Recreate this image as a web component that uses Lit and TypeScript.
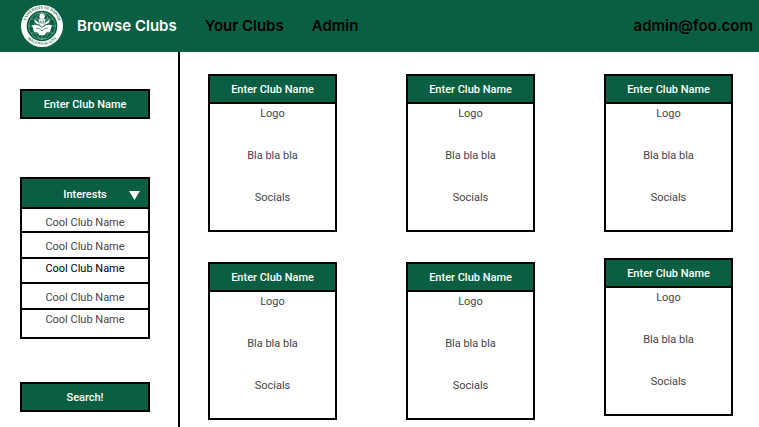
import { LitElement, html, css, svg } from "lit";
import { customElement, property, state } from "lit/decorators.js";
import { classMap } from "lit/directives/class-map.js";

@customElement("club-crest")
class ClubCrest extends LitElement {
  static styles = css`
    :host { display: block; width: 44px; height: 44px; }
    svg { display: block; width: 100%; height: 100%; overflow: visible; }
    text { font: 700 11px "Liberation Serif", serif; fill: #0a5f42; }
  `;
  render() {
    return html`
      <svg viewBox="0 0 132 132" role="img" aria-label="University crest">
        <defs>
          <path id="top" d="M21 92 A52 52 0 1 1 111 92" />
          <path id="bottom" d="M10 82 A59 59 0 0 0 122 82" />
        </defs>
        <circle cx="66" cy="66" r="63" fill="#fff" />
        <circle cx="66" cy="66" r="46" fill="#0a5f42" />
        <g fill="none" stroke="#a9cbbd" stroke-width="1.5">
          <circle cx="66" cy="66" r="40" />
          <ellipse cx="66" cy="66" rx="22" ry="40" />
          <path d="M26 66H106M32 45H100M32 87H100M66 26V106" />
        </g>
        <g fill="#fff">
          <path d="M36 64 Q52 58 66 72 Q80 58 96 64 L90 84 Q78 80 74 94 H58 Q54 80 42 84Z" />
          <path d="M42 48 Q54 50 59 62 Q47 62 42 48ZM90 48 Q78 50 73 62 Q85 62 90 48Z" />
          <path d="M59 62 L55 46 H77 L73 62 L66 69Z" />
          <path d="M60 44 Q54 34 66 26 Q64 32 71 29 Q78 36 71 44Z" />
        </g>
        <path d="M48 72 Q60 72 66 81 Q72 72 84 72M61 50V58M66 50V60M71 50V58" fill="none" stroke="#0a5f42" stroke-width="2" />
        ${svg`
          <text text-anchor="middle"><textPath href="#top" startOffset="50%">UNIVERSITY OF HAWAII</textPath></text>
          <text text-anchor="middle"><textPath href="#bottom" startOffset="50%">MA LUNA AE O NA</textPath></text>
        `}
      </svg>
    `;
  }
}

@customElement("club-card")
class ClubCard extends LitElement {
  @property() name = "";
  @property({ attribute: false }) rows: string[] = [];
  static styles = css`
    :host { display: block; color: #444; text-align: center; line-height: 16px; }
    .name {
      margin: 0; padding: 6px 0 4px; border: 2px solid #000; border-bottom: 0;
      background: #0a5f42; color: #fff; font-size: inherit; font-weight: 500;
    }
    .body {
      display: flex; flex-direction: column; gap: 26px;
      padding: 2px 0 24px; border: 2px solid #000; background: #fff;
    }
    .row { margin: 0; }
  `;
  render() {
    return html`
      <article>
        <h2 class="name">${this.name}</h2>
        <div class="body">${this.rows.map((r) => html`<p class="row">${r}</p>`)}</div>
      </article>
    `;
  }
}

@customElement("app-root")
class AppRoot extends LitElement {
  @state() private open = true;
  @state() private selected = 2;

  private interests = [
    { label: "Cool Club Name", fit: "low" },
    { label: "Cool Club Name", fit: "middle" },
    { label: "Cool Club Name", fit: "high" },
    { label: "Cool Club Name", fit: "middle" },
    { label: "Cool Club Name", fit: "last" },
  ];
  private rows = ["Logo", "Bla bla bla", "Socials"];
  private columns = [
    { tight: false, clubs: ["Enter Club Name", "Enter Club Name"] },
    { tight: false, clubs: ["Enter Club Name", "Enter Club Name"] },
    { tight: true, clubs: ["Enter Club Name", "Enter Club Name"] },
  ];

  static styles = css`
    :host {
      display: flex; flex-direction: column; min-height: 100vh;
      background: #fff; color: #000;
      font: 400 11px/16px Roboto, sans-serif;
    }
    * { box-sizing: border-box; }
    .bar {
      display: flex; align-items: center; height: 52px;
      padding: 0 6px 0 20px; background: #0a5f42;
      font: 600 15px/20px Inter, sans-serif;
    }
    .nav { display: flex; flex: 1; gap: 28px; margin-left: 13px; }
    a { color: #000; text-decoration: none; }
    .current { color: #fff; }
    .page { display: flex; flex: 1; }
    .side {
      display: flex; flex-direction: column; flex: none; width: 180px;
      padding: 37px 28px 15px 20px; border-right: 2px solid #000;
    }
    .control {
      display: block; width: 100%; height: 30px; margin: 0; padding: 1px 0 0;
      border: 2px solid #000; border-radius: 0; background: #0a5f42;
      color: #fff; font: inherit; font-weight: 500; text-align: center;
    }
    .control::placeholder { color: #fff; opacity: 1; }
    .picker { margin: 58px 0 43px; }
    .toggle {
      display: grid; grid-template-columns: 1fr auto 1fr; align-items: center;
      padding: 4px 8px 0; border-bottom: 0;
    }
    .label { grid-column: 2; }
    .arrow { justify-self: end; width: 11px; height: 9px; }
    .list { margin: 0; padding: 0; list-style: none; border-bottom: 2px solid #000; }
    .option {
      display: block; width: 100%; margin: 0; border: 2px solid #000; border-bottom: 0;
      background: #fff; color: #444; font: inherit; text-align: center;
    }
    .low { padding: 6px 0 0; }
    .middle { padding: 6px 0 2px; }
    .high { padding: 2px 0 5px; }
    .last { padding: 2px 0 9px; }
    .selected { color: #000; }
    .clubs {
      display: grid; flex: 1; grid-template-columns: repeat(3, 1fr);
      gap: 69px; padding: 22px 26px 7px 28px;
    }
    .column { display: flex; flex-direction: column; gap: 30px; }
    .tight { gap: 26px; }
  `;

  render() {
    return html`
      <header class="bar">
        <club-crest></club-crest>
        <nav class="nav">
          <a class="current" href="#browse" aria-current="page">Browse Clubs</a>
          <a href="#yours">Your Clubs</a>
          <a href="#admin">Admin</a>
        </nav>
        <a href="#account">admin@foo.com</a>
      </header>
      <div class="page">
        <aside class="side">
          <input class="control" type="text" aria-label="Club name" placeholder="Enter Club Name" />
          <div class="picker">
            <button class="control toggle" aria-expanded=${this.open} @click=${() => (this.open = !this.open)}>
              <span class="label">Interests</span>
              <svg class="arrow" viewBox="0 0 12 10" aria-hidden="true"><path d="M0 0H12L6 10Z" fill="#fff" /></svg>
            </button>
            ${this.open
              ? html`<ul class="list">
                  ${this.interests.map(
                    (o, i) => html`<li>
                      <button
                        class=${classMap({ option: true, [o.fit]: true, selected: i === this.selected })}
                        aria-pressed=${i === this.selected}
                        @click=${() => (this.selected = i)}
                      >${o.label}</button>
                    </li>`,
                  )}
                </ul>`
              : null}
          </div>
          <button class="control">Search!</button>
        </aside>
        <main class="clubs">
          ${this.columns.map(
            (c) => html`<div class=${classMap({ column: true, tight: c.tight })}>
              ${c.clubs.map((n) => html`<club-card .name=${n} .rows=${this.rows}></club-card>`)}
            </div>`,
          )}
        </main>
      </div>
    `;
  }
}
